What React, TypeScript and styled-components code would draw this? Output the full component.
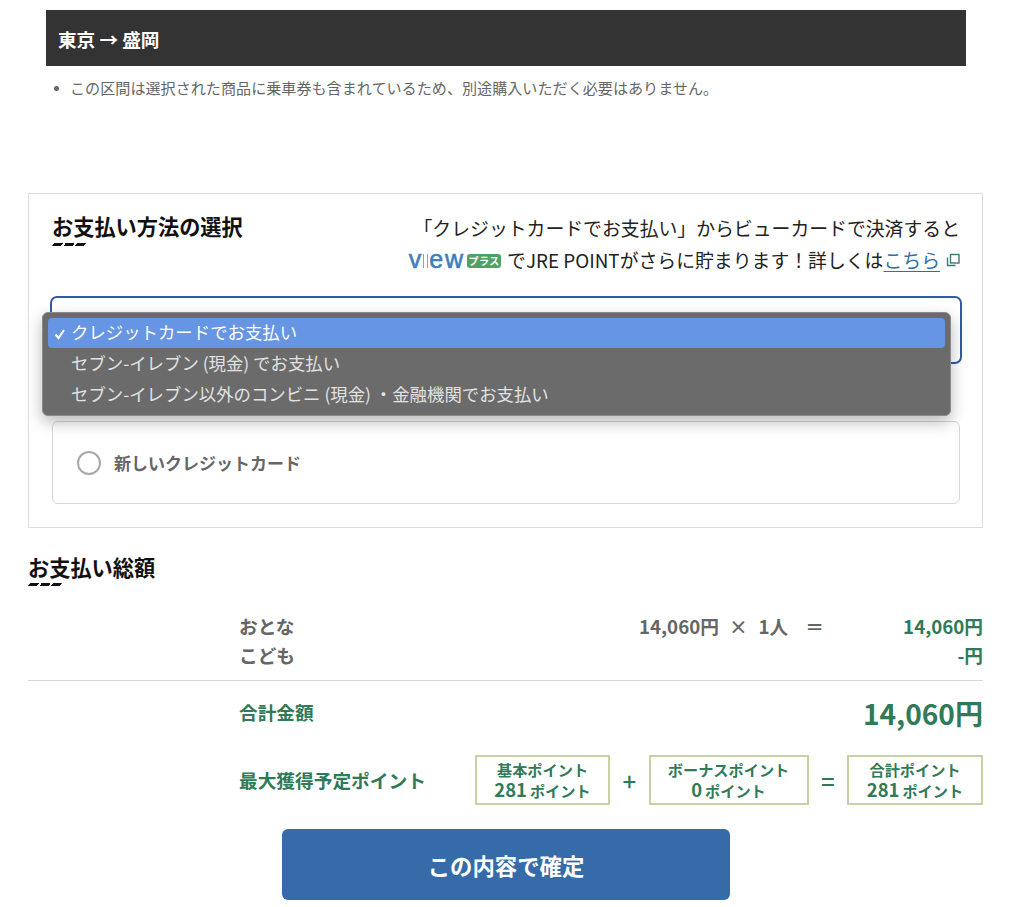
import React from "react";
import styled, { createGlobalStyle } from "styled-components";

const Global = createGlobalStyle`
  html, body { margin: 0; padding: 0; background: #fff; }
  body { font-family: "Noto Sans CJK JP", "Noto Sans", sans-serif; color: #333; overflow: hidden; }
  * { box-sizing: border-box; }
`;

const Page = styled.div`
  width: 1024px;
  height: 907px;
  padding-top: 10px;
  overflow: hidden;
`;

const RouteBar = styled.h2`
  margin: 0 58px 0 46px;
  height: 56px;
  padding: 0 12px;
  display: flex;
  align-items: center;
  background: #333;
  color: #fff;
  font-size: 18.6px;
  font-weight: 700;
`;

const NoteList = styled.ul`
  margin: 12px 58px 0 46px;
  padding: 0;
  height: 115px;
  list-style: none;
`;

const NoteItem = styled.li`
  position: relative;
  padding-left: 24px;
  font-size: 15.1px;
  line-height: 19px;
  color: #666;
  white-space: nowrap;
  &::before {
    content: "";
    position: absolute;
    left: 8px;
    top: 8px;
    width: 5px;
    height: 5px;
    border-radius: 50%;
    background: #666;
  }
`;

const Panel = styled.section`
  margin: 0 41px 0 28px;
  height: 335px;
  padding: 18px 22px 0 23px;
  border: 1px solid #dcdcdc;
`;

const PanelHead = styled.div`
  display: flex;
  justify-content: space-between;
  height: 84px;
`;

const Title = styled.h3`
  margin: 0;
  color: #111;
  font-size: 21.2px;
  font-weight: 700;
  line-height: 28px;
  white-space: nowrap;
`;

const Dashes = styled.div`
  width: 32px;
  height: 3px;
  margin: 3px 0 0 1px;
  transform: skewX(-35deg);
  background: repeating-linear-gradient(90deg, #111 0 9px, transparent 9px 11.5px);
`;

const Promo = styled.div`
  text-align: right;
  font-size: 18.85px;
  line-height: 32px;
  color: #222;
`;

const PromoLine = styled.div`
  display: flex;
  justify-content: flex-end;
  align-items: center;
  height: 32px;
  white-space: nowrap;
`;

const ViewLogo = styled.span`
  display: inline-flex;
  align-items: center;
  height: 20px;
  margin-top: -3px;
  font-family: "Liberation Sans", sans-serif;
  font-weight: 400;
  font-size: 25px;
  letter-spacing: 2px;
  line-height: 20px;
  color: #3f80b9;
  -webkit-text-stroke: 0.6px #3f80b9;
`;

const LogoBars = styled.span`
  width: 5px;
  height: 14px;
  margin: 4px 1px 0 0;
  border-left: 1.5px solid #7aa8cc;
  border-right: 1.5px solid #7aa8cc;
`;

const PlusBadge = styled.span`
  display: inline-flex;
  justify-content: center;
  align-items: center;
  width: 34px;
  height: 14px;
  margin: 1px 6px 0 2px;
  border-radius: 3px;
  background: #4fa261;
  color: #fff;
  font-size: 10px;
  font-weight: 700;
  letter-spacing: 0.5px;
`;

const Link = styled.a`
  color: #2f6fa8;
  text-decoration: underline;
  text-underline-offset: 3px;
`;

const LinkIcon = styled.svg`
  width: 14px;
  height: 14px;
  margin-left: 6px;
  color: #3b7a7c;
`;

const SelectWrap = styled.div`
  position: relative;
  height: 68px;
  margin: 0 -2px;
  border: 2px solid #2f5ca6;
  border-radius: 7px;
  background: #fff;
`;

const Menu = styled.ul`
  position: absolute;
  left: -10px;
  top: 14px;
  width: 909px;
  height: 104px;
  margin: 0;
  padding: 5px;
  list-style: none;
  background: #6a6b6a;
  border: 1px solid #8a8a8a;
  border-radius: 6px;
  box-shadow: 0 6px 16px rgba(0, 0, 0, 0.28);
  z-index: 2;
`;

const MenuItem = styled.li<{ $active?: boolean }>`
  position: relative;
  height: ${(p) => (p.$active ? "30px" : "31px")};
  padding-left: 23px;
  border-radius: 4px;
  background: ${(p) => (p.$active ? "#6595e3" : "transparent")};
  color: ${(p) => (p.$active ? "#fff" : "#e2e2e2")};
  font-size: 17.4px;
  line-height: ${(p) => (p.$active ? "27px" : "29px")};
  white-space: nowrap;
`;

const Check = styled.svg`
  position: absolute;
  left: 6px;
  top: 10px;
  width: 12px;
  height: 12px;
`;

const CardBox = styled.label`
  display: flex;
  align-items: center;
  gap: 13px;
  height: 83px;
  margin-top: 57px;
  padding-left: 24px;
  border: 1px solid #d8d8d8;
  border-radius: 6px;
`;

const Radio = styled.span`
  width: 24px;
  height: 24px;
  border: 2px solid #a8a8a8;
  border-radius: 50%;
`;

const CardLabel = styled.span`
  font-size: 17px;
  font-weight: 700;
  color: #666;
`;

const Summary = styled.section`
  margin: 25px 41px 0 28px;
`;

const SummaryDashes = styled(Dashes)`
  margin-top: 2px;
`;

const Rows = styled.div`
  padding: 25px 0 11px 211px;
  border-bottom: 1px solid #d6d6d6;
`;

const Row = styled.div`
  display: flex;
  height: 29px;
  align-items: center;
  font-size: 18.7px;
  font-weight: 700;
  color: #666;
`;

const Label = styled.span`
  flex: 1;
`;

const Expr = styled.span`
  display: flex;
  width: 182px;
  white-space: nowrap;
`;

const ExprTimes = styled.span`
  margin: 0 11px 0 10px;
`;

const ExprEq = styled.span`
  margin-left: 17px;
`;

const RowTotal = styled.span`
  width: 162px;
  text-align: right;
  color: #2f7a57;
`;

const GreenBlock = styled.div`
  padding-left: 211px;
`;

const GrandRow = styled.div`
  display: flex;
  align-items: center;
  justify-content: space-between;
  height: 60px;
  color: #2f7a57;
  font-weight: 700;
`;

const GreenLabel = styled.span`
  font-size: 18.7px;
  white-space: nowrap;
`;

const GrandAmount = styled.span`
  margin-top: 4px;
  font-size: 28.1px;
  line-height: 56px;
`;

const PointsRow = styled.div`
  display: flex;
  align-items: center;
  height: 50px;
  margin-top: 14px;
  color: #2f7a57;
  font-weight: 700;
`;

const PointsLabel = styled(GreenLabel)`
  width: 236px;
  padding-bottom: 1px;
`;

const PointBox = styled.div<{ $w: number }>`
  width: ${(p) => p.$w}px;
  height: 50px;
  padding-top: 3px;
  border: 2px solid #c9d0a4;
  text-align: center;
  font-size: 15.2px;
  line-height: 19px;
  white-space: nowrap;
`;

const PointValue = styled.div`
  font-size: 18.4px;
  line-height: 20px;
`;

const PointUnit = styled.span`
  margin-left: 3px;
  font-size: 15.2px;
`;

const Op = styled.span`
  width: 38.5px;
  text-align: center;
  font-size: 24px;
  font-weight: 500;
`;

const Confirm = styled.button`
  display: block;
  width: 448px;
  height: 71px;
  margin: 24px 0 0 254px;
  border: 0;
  border-radius: 6px;
  background: #356ba8;
  color: #fff;
  font-family: inherit;
  font-size: 22.4px;
  font-weight: 700;
`;

const Boxes = [
  { w: 135, label: "基本ポイント", value: "281" },
  { w: 160, label: "ボーナスポイント", value: "0" },
  { w: 136, label: "合計ポイント", value: "281" },
];

export default function App() {
  return (
    <Page>
      <Global />
      <RouteBar>東京 → 盛岡</RouteBar>
      <NoteList>
        <NoteItem>この区間は選択された商品に乗車券も含まれているため、別途購入いただく必要はありません。</NoteItem>
      </NoteList>

      <Panel>
        <PanelHead>
          <div>
            <Title>お支払い方法の選択</Title>
            <Dashes />
          </div>
          <Promo>
            <PromoLine>「クレジットカードでお支払い」からビューカードで決済すると</PromoLine>
            <PromoLine>
              <ViewLogo>
                v<LogoBars />ew
              </ViewLogo>
              <PlusBadge>プラス</PlusBadge>
              でJRE POINTがさらに貯まります！詳しくは<Link href="#">こちら</Link>
              <LinkIcon viewBox="0 0 14 14" fill="none" stroke="currentColor" strokeWidth="1.4">
                <rect x="4.5" y="1.5" width="8.5" height="8.5" />
                <path d="M1.5 4.5V12.5H9.5" />
              </LinkIcon>
            </PromoLine>
          </Promo>
        </PanelHead>

        <SelectWrap>
          <Menu>
            <MenuItem $active>
              <Check viewBox="0 0 12 12" fill="none" stroke="#fff" strokeWidth="2">
                <path d="M1.5 6.5L4.5 10L10 2" />
              </Check>
              クレジットカードでお支払い
            </MenuItem>
            <MenuItem>セブン-イレブン (現金) でお支払い</MenuItem>
            <MenuItem>セブン-イレブン以外のコンビニ (現金) ・金融機関でお支払い</MenuItem>
          </Menu>
        </SelectWrap>

        <CardBox>
          <Radio />
          <CardLabel>新しいクレジットカード</CardLabel>
        </CardBox>
      </Panel>

      <Summary>
        <Title>お支払い総額</Title>
        <SummaryDashes />
        <Rows>
          <Row>
            <Label>おとな</Label>
            <Expr>
              14,060円<ExprTimes>×</ExprTimes>1人<ExprEq>＝</ExprEq>
            </Expr>
            <RowTotal>14,060円</RowTotal>
          </Row>
          <Row>
            <Label>こども</Label>
            <RowTotal>-円</RowTotal>
          </Row>
        </Rows>
        <GreenBlock>
          <GrandRow>
            <GreenLabel>合計金額</GreenLabel>
            <GrandAmount>14,060円</GrandAmount>
          </GrandRow>
          <PointsRow>
            <PointsLabel>最大獲得予定ポイント</PointsLabel>
            {Boxes.map((b, i) => (
              <React.Fragment key={b.label}>
                {i === 1 && <Op>+</Op>}
                {i === 2 && <Op>=</Op>}
                <PointBox $w={b.w}>
                  {b.label}
                  <PointValue>
                    {b.value}
                    <PointUnit>ポイント</PointUnit>
                  </PointValue>
                </PointBox>
              </React.Fragment>
            ))}
          </PointsRow>
        </GreenBlock>
        <Confirm>この内容で確定</Confirm>
      </Summary>
    </Page>
  );
}
